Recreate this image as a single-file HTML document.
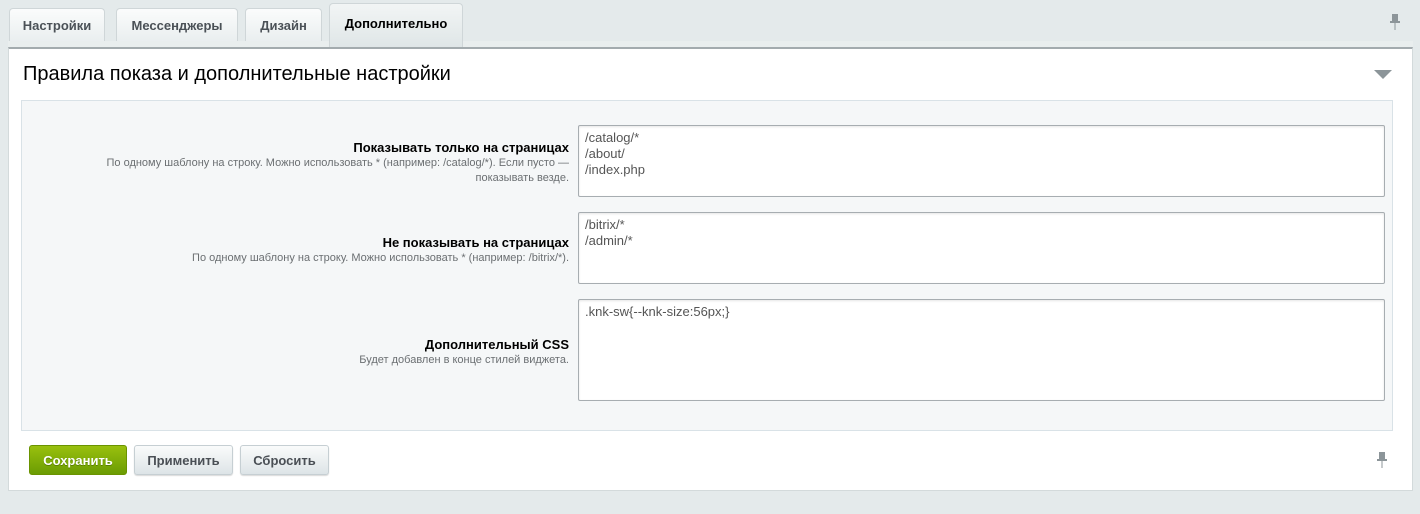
<!DOCTYPE html>
<html><head><meta charset="utf-8"><style>
*{box-sizing:border-box;margin:0;padding:0}
body{width:1420px;height:514px;background:#e4eaeb;font-family:"Liberation Sans",Arial,sans-serif;position:relative;overflow:hidden}
.tab{position:absolute;top:8px;height:34px;border:1px solid #cfd6d8;border-bottom:none;border-radius:4px 4px 0 0;background:linear-gradient(#fbfcfc,#e9eeef);font-weight:bold;font-size:13px;color:#4b5157;text-align:center;line-height:33px}
.tab.act{top:3px;height:40px;background:linear-gradient(#f2f5f5,#dfe6e7);color:#000;line-height:40px}
.strip{position:absolute;left:8px;top:41px;width:1405px;height:6px;background:#e9eeee}
.panel{position:absolute;left:8px;top:47px;width:1405px;height:444px;background:#fff;border:1px solid #d3dadb;border-top:2px solid #a3abae}
.title{position:absolute;left:23px;top:63px;font-size:20px;color:#000}
.inner{position:absolute;left:21px;top:100px;width:1372px;height:331px;background:#f5f7f8;border:1px solid #d9e2e7}
.lab{position:absolute;right:851px;text-align:right;font-size:11px;color:#6b6f72;line-height:15px}
.lab b{display:block;font-size:13px;color:#000;line-height:16px}
.ta{position:absolute;left:578px;width:807px;background:#fff;border:1px solid #a7adb1;border-radius:2px;box-shadow:inset 0 1px 2px rgba(0,0,0,.1);font-size:13px;color:#555;padding:4px 6px;line-height:16px}
.btn{position:absolute;top:445px;height:30px;border-radius:3px;font-weight:bold;font-size:13px;text-align:center;line-height:29px}
.g{background:linear-gradient(#99c00e,#6b9c03);color:#fff;border:1px solid #6a9300;text-shadow:0 1px 0 #5a7f00}
.w{background:linear-gradient(#fafbfb,#dde4e7);color:#4a4f55;border:1px solid #c6cfd3;box-shadow:0 1px 1px rgba(0,0,0,.15)}
</style></head><body>
<div class="tab" style="left:9px;width:96px">Настройки</div>
<div class="tab" style="left:116px;width:122px">Мессенджеры</div>
<div class="tab" style="left:245px;width:77px">Дизайн</div>
<div class="strip"></div>
<div class="tab act" style="left:329px;width:134px;height:44px">Дополнительно</div>
<svg style="position:absolute;left:1389px;top:14px" width="12" height="18"><rect x="3" y="0" width="6" height="7" fill="#8c9599"/><rect x="1" y="7" width="10" height="2" fill="#8c9599"/><rect x="5.5" y="9" width="1" height="7" fill="#8c9599"/></svg>
<div class="panel"></div>
<div class="title">Правила показа и дополнительные настройки</div>
<svg style="position:absolute;left:1374px;top:70px" width="19" height="10"><path d="M0 0H18L9 9Z" fill="#8c9599"/></svg>
<div class="inner"></div>
<div class="lab" style="top:140px"><b>Показывать только на страницах</b>По одному шаблону на строку. Можно использовать * (например: /catalog/*). Если пусто —<br>показывать везде.</div>
<div class="ta" style="top:125px;height:72px">/catalog/*<br>/about/<br>/index.php</div>
<div class="lab" style="top:235px"><b>Не показывать на страницах</b>По одному шаблону на строку. Можно использовать * (например: /bitrix/*).</div>
<div class="ta" style="top:212px;height:72px">/bitrix/*<br>/admin/*</div>
<div class="lab" style="top:337px"><b>Дополнительный CSS</b>Будет добавлен в конце стилей виджета.</div>
<div class="ta" style="top:299px;height:102px">.knk-sw{--knk-size:56px;}</div>
<div class="btn g" style="left:29px;width:98px">Сохранить</div>
<div class="btn w" style="left:134px;width:99px">Применить</div>
<div class="btn w" style="left:240px;width:89px">Сбросить</div>
<svg style="position:absolute;left:1376px;top:452px" width="12" height="18"><rect x="3" y="0" width="6" height="7" fill="#8c9599"/><rect x="1" y="7" width="10" height="2" fill="#8c9599"/><rect x="5.5" y="9" width="1" height="7" fill="#8c9599"/></svg>
</body></html>
